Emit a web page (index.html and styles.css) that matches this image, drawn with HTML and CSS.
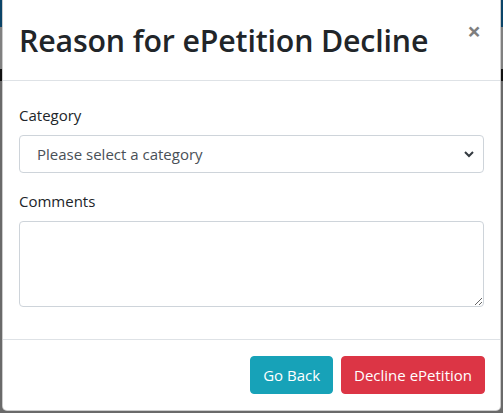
FILE: index.html
```html
<!DOCTYPE html>
<html lang="en">
<head>
<meta charset="utf-8">
<title>Reason for ePetition Decline</title>
<link rel="stylesheet" href="styles.css">
</head>
<body>
<div class="modal">
  <div class="modal-header">
    <h2 class="modal-title">Reason for ePetition Decline</h2>
    <button class="close" type="button" aria-label="Close">×</button>
  </div>
  <div class="modal-body">
    <div class="form-group">
      <label class="form-label" for="cat">Category</label>
      <div class="select-wrap">
        <select id="cat" class="form-select">
          <option>Please select a category</option>
        </select>
        <svg class="chev" width="10" height="8" viewBox="0 0 10 8"><path d="M1 2 L5 6 L9 2" fill="none" stroke="#343a40" stroke-width="2"/></svg>
      </div>
    </div>
    <div class="form-group">
      <label class="form-label" for="com">Comments</label>
      <textarea id="com" class="form-control" rows="3"></textarea>
    </div>
  </div>
  <div class="modal-footer">
    <button class="btn btn-info" type="button">Go Back</button>
    <button class="btn btn-danger" type="button">Decline ePetition</button>
  </div>
</div>
</body>
</html>
```
FILE: styles.css
```css
* { box-sizing: border-box; }
html, body { margin: 0; padding: 0; }
body {
  width: 503px;
  height: 413px;
  overflow: hidden;
  font-family: "Open Sans", "Noto Sans", sans-serif;
  color: #212529;
  background:
    linear-gradient(to bottom,
      #0b4468 0, #0b4468 27px,
      #808080 27px, #808080 69px,
      #101010 69px, #101010 81px,
      #6a6a6a 81px, #6a6a6a 100%);
}
.modal {
  margin-left: 2px;
  width: 499px;
  height: 411px;
  background: #fff;
  border: 1px solid rgba(0,0,0,.2);
  border-top: none;
  border-radius: 0 0 5px 5px;
  display: flex;
  flex-direction: column;
}
.modal-header {
  display: flex;
  align-items: flex-start;
  padding: 21px 16px 19px 16px;
  border-bottom: 1px solid #dee2e6;
}
.modal-title {
  margin: 0;
  font-size: 30.3px;
  font-weight: 600;
  line-height: 40px;
  letter-spacing: -0.15px;
}
.close {
  margin-left: auto;
  margin-top: -2px;
  padding: 0 3px;
  border: none;
  background: transparent;
  font-family: "Open Sans", sans-serif;
  font-size: 24px;
  font-weight: 700;
  line-height: 24px;
  color: #000;
  opacity: .5;
}
.modal-body {
  padding: 22px 16px 0 16px;
}
.form-group { margin-bottom: 16px; }
.form-label {
  display: block;
  margin-bottom: 8px;
  font-size: 15px;
  line-height: 24px;
}
.select-wrap { position: relative; }
.form-select {
  display: block;
  width: 100%;
  height: 38px;
  padding: 0 28px 0 17px;
  font-family: inherit;
  font-size: 15px;
  color: #495057;
  background: #fff;
  border: 1px solid #ced4da;
  border-radius: 4px;
  appearance: none;
  -webkit-appearance: none;
}
.chev {
  position: absolute;
  right: 10px;
  top: 15px;
  pointer-events: none;
}
.form-control {
  display: block;
  width: 100%;
  height: 86px;
  padding: 6px 12px;
  font-family: inherit;
  font-size: 16px;
  border: 1px solid #ced4da;
  border-radius: 4px;
  resize: vertical;
}
.modal-footer {
  display: flex;
  justify-content: flex-end;
  gap: 8px;
  margin-top: auto;
  padding: 16px 15px 16px 16px;
  border-top: 1px solid #dee2e6;
}
.btn {
  height: 38px;
  padding: 0 12px;
  font-family: inherit;
  font-size: 15px;
  line-height: 24px;
  color: #fff;
  border: 1px solid transparent;
  border-radius: 4px;
}
.btn-info { background: #17a2b8; border-color: #17a2b8; }
.btn-danger { background: #dc3545; border-color: #dc3545; }
```
